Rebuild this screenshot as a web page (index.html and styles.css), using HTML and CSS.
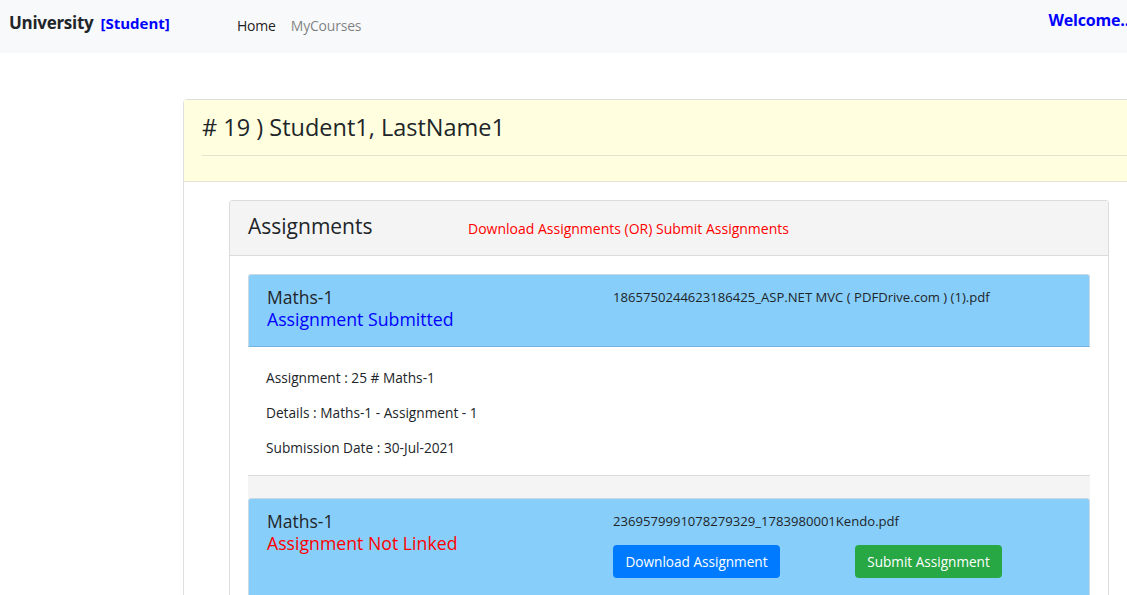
FILE: index.html
```html
<!DOCTYPE html>
<html lang="en">
<head>
<meta charset="utf-8">
<title>University - Student</title>
<link rel="stylesheet" href="styles.css">
</head>
<body>
<nav class="navbar">
  <div class="brand">University <span class="role">[Student]</span></div>
  <ul class="nav-links">
    <li><a class="nav-link active" href="#">Home</a></li>
    <li><a class="nav-link" href="#">MyCourses</a></li>
  </ul>
  <div class="welcome">Welcome..</div>
</nav>

<main class="page">
  <section class="student-card">
    <header class="student-header">
      <h4 class="student-title"># 19 ) Student1, LastName1</h4>
      <hr class="divider">
    </header>
    <div class="student-body">
      <section class="assign-card">
        <header class="assign-header">
          <h5 class="assign-title">Assignments</h5>
          <span class="assign-hint">Download Assignments (OR) Submit Assignments</span>
        </header>
        <div class="assign-body">
          <article class="item">
            <div class="item-head">
              <div class="item-left">
                <div class="subject">Maths-1</div>
                <div class="status status-ok">Assignment Submitted</div>
              </div>
              <div class="item-right">
                <div class="file">1865750244623186425_ASP.NET MVC ( PDFDrive.com ) (1).pdf</div>
              </div>
            </div>
            <div class="item-body">
              <p>Assignment : 25 # Maths-1</p>
              <p>Details : Maths-1 - Assignment - 1</p>
              <p>Submission Date : 30-Jul-2021</p>
            </div>
            <div class="item-foot"></div>
          </article>
          <article class="item">
            <div class="item-head item-head-tall">
              <div class="item-left">
                <div class="subject">Maths-1</div>
                <div class="status status-bad">Assignment Not Linked</div>
              </div>
              <div class="item-right">
                <div class="file">2369579991078279329_1783980001Kendo.pdf</div>
                <div class="actions">
                  <button class="btn btn-blue">Download Assignment</button>
                  <button class="btn btn-green">Submit Assignment</button>
                </div>
              </div>
            </div>
          </article>
        </div>
      </section>
    </div>
  </section>
</main>
</body>
</html>
```

FILE: styles.css
```css
* { box-sizing: border-box; }
html, body { margin: 0; padding: 0; }
body {
  font-family: "Open Sans", "Noto Sans", sans-serif;
  color: #212529;
  background: #fff;
  overflow: hidden;
  width: 1127px;
  height: 595px;
}
.navbar {
  height: 53px;
  background: #f8f9fa;
  display: flex;
  align-items: flex-start;
  padding: 0 0 0 9px;
}
.brand {
  font-size: 17px;
  font-weight: 700;
  margin-top: 11px;
  width: 228px;
  letter-spacing: -0.3px;
  white-space: nowrap;
}
.role {
  color: #0000ff;
  font-size: 15px;
  margin-left: 3px;
  letter-spacing: 0;
}
.nav-links {
  list-style: none;
  display: flex;
  gap: 15px;
  margin: 14px 0 0 0;
  padding: 0;
}
.nav-link {
  font-size: 14px;
  text-decoration: none;
  color: rgba(0, 0, 0, 0.5);
  letter-spacing: -0.2px;
}
.nav-link.active { color: rgba(0, 0, 0, 0.9); }
.welcome {
  margin-left: auto;
  margin-top: 9px;
  margin-right: -2px;
  color: #0000ff;
  font-weight: 700;
  font-size: 16px;
  letter-spacing: -0.2px;
}
.page {
  padding: 46px 0 0 183px;
}
.student-card {
  width: 972px;
  border: 1px solid #dfdfdf;
  border-radius: 4px;
  background: #fff;
}
.student-header {
  background: #ffffe0;
  padding: 11px 0 0 18px;
  border-bottom: 1px solid #e3e3d0;
}
.student-title {
  margin: 0;
  font-size: 23.5px;
  font-weight: 500;
  line-height: 32px;
}
.divider {
  border: 0;
  border-top: 1px solid #e2e2cf;
  margin: 12px 0 25px 0;
}
.student-body {
  padding: 18px 45px 0 45px;
}
.assign-card {
  border: 1px solid #dcdcdc;
  border-radius: 3px;
  background: #fff;
  height: 440px;
}
.assign-header {
  background: #f4f4f4;
  border-bottom: 1px solid #dcdcdc;
  height: 55px;
  display: flex;
  align-items: center;
  padding: 0 18px;
}
.assign-title {
  margin: 0 0 4px 0;
  font-size: 21px;
  font-weight: 500;
  width: 220px;
}
.assign-hint {
  color: #ff0000;
  font-size: 14px;
}
.assign-body {
  padding: 18px 18px 0 18px;
}
.item-head {
  background: #87cefa;
  border: 1px solid #c9d9e4;
  border-bottom-color: #74b3db;
  border-radius: 3px 3px 0 0;
  display: flex;
  padding: 12px 18px 16px 18px;
}
.item-head-tall { padding-bottom: 24px; }
.item-left { width: 346px; }
.subject {
  font-size: 17.5px;
  font-weight: 500;
  line-height: 21px;
}
.status {
  font-size: 17.7px;
  line-height: 22px;
}
.status-ok { color: #0000ff; }
.status-bad { color: #ff0000; }
.file {
  font-size: 13.1px;
  line-height: 20px;
}
.actions {
  display: flex;
  gap: 75px;
  margin-top: 14px;
}
.btn {
  font-family: inherit;
  font-size: 13.6px;
  color: #fff;
  border: 0;
  border-radius: 4px;
  height: 33px;
  padding: 0 12px;
}
.btn-blue { background: #007bff; width: 167px; }
.btn-green { background: #28a745; width: 147px; }
.item-body {
  padding: 21px 18px 2px 18px;
}
.item-body p {
  margin: 0 0 16px 0;
  font-size: 13.7px;
  line-height: 19px;
}
.item-foot {
  height: 23px;
  background: #f4f4f4;
  border-top: 1px solid #dcdcdc;
}
```
